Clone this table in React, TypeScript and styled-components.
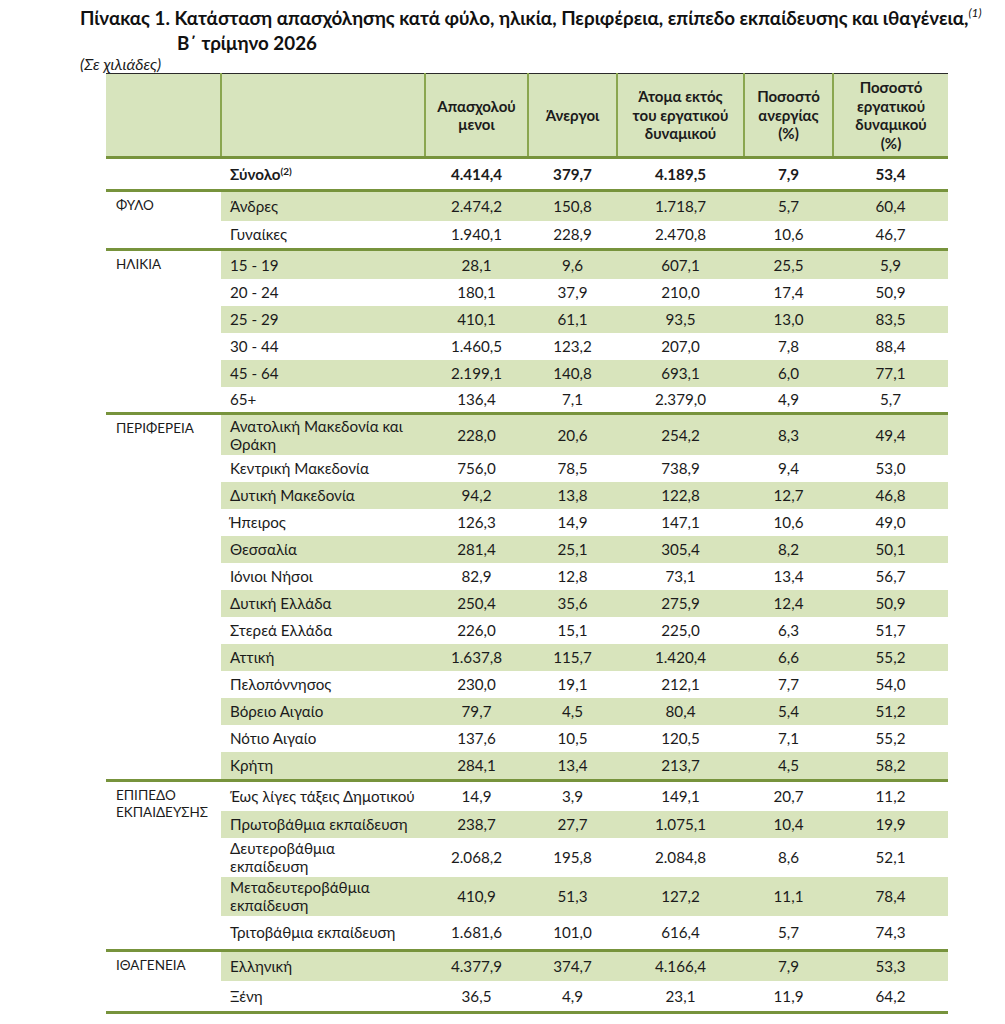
import styled, { createGlobalStyle } from 'styled-components'

const GlobalStyle = createGlobalStyle`
	body {
		margin: 0;
		background: #ffffff;
	}
`

const Page = styled.div`
	font-family: Lato, "Noto Sans", sans-serif;
	color: #1b1b1b;
	padding: 5px 0 0 80px;
`

const Title = styled.h1`
	margin: 0;
	font-size: 18.8px;
	font-weight: 700;
	line-height: 25px;
	color: #111;
`

const TitleLine = styled.div<{ $indent?: number }>`
	padding-left: ${p => p.$indent ?? 0}px;
	white-space: nowrap;
`

const Note = styled.sup`
	font-style: italic;
	font-weight: 400;
	font-size: 12px;
	line-height: 0;
	vertical-align: 8px;
`

const Unit = styled.div`
	font-style: italic;
	font-size: 16px;
	line-height: 18px;
`

const Table = styled.table`
	margin-left: 26px;
	width: 842px;
	border-collapse: collapse;
	table-layout: fixed;
	font-size: 15.2px;
`

const HeadRow = styled.tr`
	height: 84px;
	background: #d7e4bd;
	border-top: 1px solid #2a2a2a;
	border-bottom: 3px solid #77933c;
`

const Th = styled.th`
	font-weight: 700;
	font-size: 15px;
	text-align: center;
	vertical-align: middle;
	line-height: 18.5px;
	padding: 0 2px;
	border-left: 2px solid #8aa64f;
	&:first-child {
		border-left: none;
	}
`

const Group = styled.tbody`
	border-bottom: 3px solid #77933c;
`

const Row = styled.tr<{ $height: number }>`
	height: ${p => p.$height}px;
`

const CategoryCell = styled.td`
	vertical-align: top;
	padding: 5px 0 0 10px;
	line-height: 17px;
	white-space: pre;
	font-size: 13.5px;
`

const LabelCell = styled.td<{ $shade?: boolean; $bold?: boolean }>`
	background: ${p => (p.$shade ? '#d8e4bc' : 'transparent')};
	font-weight: ${p => (p.$bold ? 700 : 400)};
	padding: 0 4px 0 9px;
	line-height: 18px;
	white-space: pre;
	vertical-align: middle;
`

const ValueCell = styled.td<{ $shade?: boolean; $bold?: boolean }>`
	background: ${p => (p.$shade ? '#d8e4bc' : 'transparent')};
	font-weight: ${p => (p.$bold ? 700 : 400)};
	text-align: center;
	vertical-align: middle;
	padding: 0;
`

const Mark = styled.sup`
	font-size: 10px;
	line-height: 0;
	vertical-align: 5px;
`

type Entry = [string, string, string, string, string, string, number?]

const groups: { name: string; rows: Entry[] }[] = [
	{
		name: 'ΦΥΛΟ',
		rows: [
			['Άνδρες', '2.474,2', '150,8', '1.718,7', '5,7', '60,4', 30],
			['Γυναίκες', '1.940,1', '228,9', '2.470,8', '10,6', '46,7', 29],
		],
	},
	{
		name: 'ΗΛΙΚΙΑ',
		rows: [
			['15 - 19', '28,1', '9,6', '607,1', '25,5', '5,9', 29],
			['20 - 24', '180,1', '37,9', '210,0', '17,4', '50,9'],
			['25 - 29', '410,1', '61,1', '93,5', '13,0', '83,5'],
			['30 - 44', '1.460,5', '123,2', '207,0', '7,8', '88,4'],
			['45 - 64', '2.199,1', '140,8', '693,1', '6,0', '77,1'],
			['65+', '136,4', '7,1', '2.379,0', '4,9', '5,7', 27],
		],
	},
	{
		name: 'ΠΕΡΙΦΕΡΕΙΑ',
		rows: [
			['Ανατολική Μακεδονία και\nΘράκη', '228,0', '20,6', '254,2', '8,3', '49,4', 41],
			['Κεντρική Μακεδονία', '756,0', '78,5', '738,9', '9,4', '53,0'],
			['Δυτική Μακεδονία', '94,2', '13,8', '122,8', '12,7', '46,8'],
			['Ήπειρος', '126,3', '14,9', '147,1', '10,6', '49,0'],
			['Θεσσαλία', '281,4', '25,1', '305,4', '8,2', '50,1'],
			['Ιόνιοι Νήσοι', '82,9', '12,8', '73,1', '13,4', '56,7'],
			['Δυτική Ελλάδα', '250,4', '35,6', '275,9', '12,4', '50,9'],
			['Στερεά Ελλάδα', '226,0', '15,1', '225,0', '6,3', '51,7'],
			['Αττική', '1.637,8', '115,7', '1.420,4', '6,6', '55,2'],
			['Πελοπόννησος', '230,0', '19,1', '212,1', '7,7', '54,0'],
			['Βόρειο Αιγαίο', '79,7', '4,5', '80,4', '5,4', '51,2'],
			['Νότιο Αιγαίο', '137,6', '10,5', '120,5', '7,1', '55,2'],
			['Κρήτη', '284,1', '13,4', '213,7', '4,5', '58,2', 29],
		],
	},
	{
		name: 'ΕΠΙΠΕΔΟ\nΕΚΠΑΙΔΕΥΣΗΣ',
		rows: [
			['Έως λίγες τάξεις Δημοτικού', '14,9', '3,9', '149,1', '20,7', '11,2', 30],
			['Πρωτοβάθμια εκπαίδευση', '238,7', '27,7', '1.075,1', '10,4', '19,9'],
			['Δευτεροβάθμια\nεκπαίδευση', '2.068,2', '195,8', '2.084,8', '8,6', '52,1', 39],
			['Μεταδευτεροβάθμια\nεκπαίδευση', '410,9', '51,3', '127,2', '11,1', '78,4', 39],
			['Τριτοβάθμια εκπαίδευση', '1.681,6', '101,0', '616,4', '5,7', '74,3', 35],
		],
	},
	{
		name: 'ΙΘΑΓΕΝΕΙΑ',
		rows: [
			['Ελληνική', '4.377,9', '374,7', '4.166,4', '7,9', '53,3', 30],
			['Ξένη', '36,5', '4,9', '23,1', '11,9', '64,2', 32],
		],
	},
]

const widths = [115, 204, 103, 89, 127, 89, 115]

export default function App() {
	let stripe = 0
	return (
		<Page>
			<GlobalStyle />
			<Title>
				<TitleLine>
					Πίνακας 1. Κατάσταση απασχόλησης κατά φύλο, ηλικία, Περιφέρεια, επίπεδο εκπαίδευσης και ιθαγένεια,<Note>(1)</Note>
				</TitleLine>
				<TitleLine $indent={97}>Β΄ τρίμηνο 2026</TitleLine>
			</Title>
			<Unit>(Σε χιλιάδες)</Unit>
			<Table>
				<colgroup>
					{widths.map((w, i) => <col key={i} style={{ width: w }} />)}
				</colgroup>
				<thead>
					<HeadRow>
						<Th />
						<Th />
						<Th>Απασχολού<br />μενοι</Th>
						<Th>Άνεργοι</Th>
						<Th>Άτομα εκτός<br />του εργατικού<br />δυναμικού</Th>
						<Th>Ποσοστό<br />ανεργίας<br />(%)</Th>
						<Th>Ποσοστό<br />εργατικού<br />δυναμικού<br />(%)</Th>
					</HeadRow>
				</thead>
				<Group>
					<Row $height={33}>
						<td />
						<LabelCell $bold>Σύνολο<Mark>(2)</Mark></LabelCell>
						<ValueCell $bold>4.414,4</ValueCell>
						<ValueCell $bold>379,7</ValueCell>
						<ValueCell $bold>4.189,5</ValueCell>
						<ValueCell $bold>7,9</ValueCell>
						<ValueCell $bold>53,4</ValueCell>
					</Row>
				</Group>
				{groups.map(g => (
					<Group key={g.name}>
						{g.rows.map((r, i) => {
							const shade = stripe++ % 2 === 0
							return (
								<Row key={r[0]} $height={r[6] ?? 27}>
									{i === 0 && <CategoryCell rowSpan={g.rows.length}>{g.name}</CategoryCell>}
									<LabelCell $shade={shade}>{r[0]}</LabelCell>
									{r.slice(1, 6).map((v, j) => (
										<ValueCell key={j} $shade={shade}>{v}</ValueCell>
									))}
								</Row>
							)
						})}
					</Group>
				))}
			</Table>
		</Page>
	)
}
